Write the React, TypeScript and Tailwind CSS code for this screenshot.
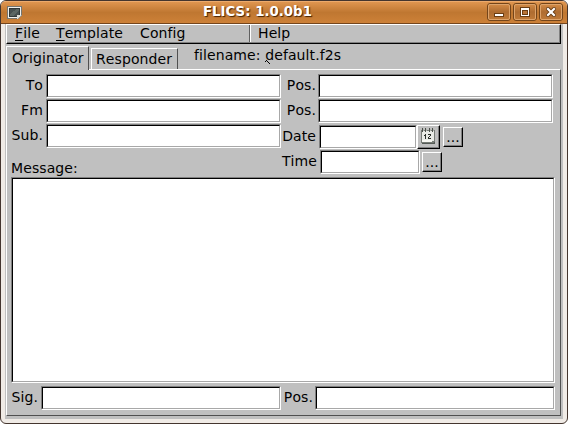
import type { ReactNode } from "react";

function Field({ className, label }: { className: string; label: string }) {
  return (
    <div className={`shrink-0 border border-t-[#808080] border-l-[#808080] border-r-white border-b-white ${className}`}>
      <input
        aria-label={label}
        className="block h-full w-full border border-t-black border-l-black border-r-[#a8a8a8] border-b-[#a8a8a8] bg-white px-1 outline-none"
      />
    </div>
  );
}

function Label({ className, children }: { className: string; children: ReactNode }) {
  return <span className={`flex shrink-0 justify-end leading-[22px] whitespace-nowrap ${className}`}>{children}</span>;
}

function DotsButton({ className }: { className: string }) {
  return (
    <button
      aria-label="Now"
      className={`h-5 w-5 shrink-0 border border-t-white border-l-white border-r-black border-b-black ${className}`}
    >
      <span className="flex h-full w-full items-end justify-center border-r border-b border-[#808080] pl-px leading-[15px]">
        ...
      </span>
    </button>
  );
}

function WindowButton({ className, children }: { className: string; children: ReactNode }) {
  return (
    <button
      className={`h-[18px] w-6 shrink-0 rounded-[3px] border border-[#74451a] bg-linear-to-b from-[#d58c46] via-[#ae6c31] to-[#c07a38] ${className}`}
    >
      <span className="flex h-full w-full items-center justify-center rounded-[2px] border border-[#dda36b]">
        {children}
      </span>
    </button>
  );
}

function CalendarIcon() {
  return (
    <svg width="15" height="17" viewBox="0 0 15 17" shapeRendering="crispEdges">
      <path d="M1 14h13v2H1z" fill="#555b55" />
      <path d="M0 2h14v11l-2 2H0z" fill="#777c76" />
      <path d="M1 3h12v10H1z" fill="#e9ebe6" />
      <path d="M1 12h10v2H1z" fill="#f8f8f3" />
      <path d="M1 0h1v4H1zM4 0h1v4H4zM8 0h1v4H8zM11 0h1v4h-1z" fill="#4b504b" />
      <path d="M2 1h1v2H2zM5 1h1v2H5zM9 1h1v2H9zM12 1h1v2h-1z" fill="#b0b4ae" />
      <path d="M4 6h1v5H4zM3 7h1v1H3zM7 6h3v1H7zM9 7h1v1H9zM8 8h1v1H8zM7 9h1v1H7zM7 10h3v1H7z" fill="#292f29" />
    </svg>
  );
}

function WindowIcon() {
  return (
    <svg width="16" height="14" viewBox="0 0 16 14" className="mt-[4px] ml-[6px] shrink-0" shapeRendering="crispEdges">
      <path d="M0 0h15v9l-4 4H0z" fill="#75756f" />
      <path d="M1 1h13v8l-4 3H1z" fill="#f0f0ed" />
      <path d="M2 2h11v6l-3 3H2z" fill="#303838" />
      <path d="M3 3h9v5l-2 2H3z" fill="#465050" />
      <path d="M3 8l7-5h2v2l-6 5H3z" fill="#5b6663" />
      <path d="M10 13V9h5z" fill="#deded8" />
      <path d="M11 12h1v-1h1v-1h1V9h1v1h-1v1h-1v1h-1v1h-1z" fill="#969690" />
    </svg>
  );
}

export default function App() {
  return (
    <div className="bg-white">
      <div className="relative flex h-[424px] w-[568px] flex-col overflow-hidden rounded-[6px] border border-[#44352e] bg-[#f0ebe6] font-['DejaVu_Sans',sans-serif] text-[14px] tracking-[0.1px] text-black [font-kerning:none]">
        <header className="flex h-[23px] shrink-0 border-t border-b border-t-[#ecaa6c] border-b-[#74451c] bg-linear-to-b from-[#df954f] via-[#bf7731] to-[#cd8138]">
          <WindowIcon />
          <h1 className="ml-[180px] w-[120px] text-[13.33px] leading-[19px] font-bold tracking-normal whitespace-nowrap text-white [font-kerning:normal] [text-shadow:1px_1px_1px_#442000]">
            FLICS: 1.0.0b1
          </h1>
          <WindowButton className="mt-px ml-[164px]">
            <svg width="10" height="8" viewBox="0 0 10 8" className="mt-[2px]" shapeRendering="crispEdges">
              <path d="M0 4h10v4H0z" fill="#6a3d14" />
              <path d="M1 5h8v2H1z" fill="#fff" />
            </svg>
          </WindowButton>
          <WindowButton className="mt-px ml-[2px]">
            <svg width="10" height="10" viewBox="0 0 10 10" shapeRendering="crispEdges">
              <path d="M0 0h10v10H0z" fill="#6a3d14" />
              <path d="M1 1h8v8H1z" fill="#fff" />
              <path d="M2 3h6v5H2z" fill="#6a3d14" />
              <path d="M3 4h4v3H3z" fill="#b97437" />
            </svg>
          </WindowButton>
          <WindowButton className="mt-px ml-[2px]">
            <svg width="10" height="10" viewBox="0 0 10 10">
              <path d="M2 2l6 6M8 2L2 8" stroke="#6a3d14" strokeWidth="4" strokeLinecap="square" />
              <path d="M2 2l6 6M8 2L2 8" stroke="#fff" strokeWidth="2.2" strokeLinecap="square" />
            </svg>
          </WindowButton>
        </header>

        <main className="mr-[4px] ml-[4px] flex h-[395px] shrink-0 flex-col bg-[#c0c0c0] pr-[2px] pl-px">
          <nav className="h-5 w-[555px] shrink-0 border border-t-white border-l-white border-r-black border-b-black">
            <div className="flex h-full border-r border-b border-[#808080] leading-[17px]">
              <span className="ml-[8px] w-[41px]"><u className="underline-offset-2">F</u>ile</span>
              <span className="w-[84px]"><u className="underline-offset-2">T</u>emplate</span>
              <span className="w-[109px]">Config</span>
              <span className="w-[9px] border-l border-[#606060]">
                <i className="block h-full w-px bg-white" />
              </span>
              <span>Help</span>
            </div>
          </nav>

          <div className="flex h-[26px] shrink-0 pt-[2px]">
            <div className="z-10 h-6 w-[83px] shrink-0 border-t border-r border-l border-t-white border-r-[#505050] border-l-white bg-[#c0c0c0] pl-[5px] leading-[23px]">
              Originator
            </div>
            <div className="mt-[2px] ml-[2px] h-[21px] w-[87px] shrink-0 border-t border-r border-l border-t-white border-r-[#505050] border-l-white pl-1 leading-[21px]">
              Responder
            </div>
            <div className="ml-4 leading-[19px] whitespace-nowrap">filename: default.f2s</div>
          </div>

          <section className="-mt-px h-[347px] w-[555px] shrink-0 border border-t-white border-l-white border-r-[#505050] border-b-[#505050]">
            <div className="mt-1 flex h-[25px]">
              <Label className="mr-[3px] w-9">To</Label>
              <Field label="To" className="h-6 w-[235px]" />
              <Label className="mr-[2px] w-[35px]">Pos.</Label>
              <Field label="To position" className="h-6 w-[235px]" />
            </div>
            <div className="flex h-[25px]">
              <Label className="mr-[3px] w-9">Fm</Label>
              <Field label="From" className="h-6 w-[235px]" />
              <Label className="mr-[2px] w-[35px]">Pos.</Label>
              <Field label="From position" className="h-6 w-[235px]" />
            </div>
            <div className="flex h-[53px]">
              <div className="w-[274px] shrink-0">
                <div className="flex">
                  <Label className="mr-[3px] w-9">Sub.</Label>
                  <Field label="Subject" className="h-6 w-[235px]" />
                </div>
                <div className="mt-[9px] ml-1 leading-[22px]">Message:</div>
              </div>
              <div className="pt-px">
                <div className="flex h-[25px]">
                  <Label className="mr-[3px] w-[35px]">Date</Label>
                  <Field label="Date" className="h-6 w-[98px]" />
                  <button aria-label="Choose date" className="h-6 w-[23px] border border-t-white border-l-white border-r-black border-b-black">
                    <span className="flex h-full w-full items-center justify-center border-r border-b border-[#808080]">
                      <CalendarIcon />
                    </span>
                  </button>
                  <DotsButton className="mt-[2px] ml-[3px]" />
                </div>
                <div className="flex h-[25px]">
                  <Label className="mr-[3px] w-9">Time</Label>
                  <Field label="Time" className="h-6 w-[100px]" />
                  <DotsButton className="mt-[2px] ml-[2px]" />
                </div>
              </div>
            </div>
            <div className="ml-1 h-[206px] w-[544px] border border-t-[#808080] border-l-[#808080] border-r-white border-b-white">
              <textarea
                aria-label="Message"
                className="block h-full w-full resize-none border border-t-black border-l-black border-r-[#a8a8a8] border-b-[#a8a8a8] bg-white outline-none"
              />
            </div>
            <div className="mt-[3px] flex">
              <Label className="mr-[3px] w-[31px]">Sig.</Label>
              <Field label="Signature" className="h-6 w-[240px]" />
              <Label className="mr-[2px] w-[32px]">Pos.</Label>
              <Field label="Signature position" className="h-6 w-[240px]" />
            </div>
          </section>
        </main>

        <svg className="absolute top-[58px] left-[263px]" width="8" height="8" viewBox="0 0 8 8" shapeRendering="crispEdges">
          <path d="M2 1h1v1H2zM1 2h1v1H1zM3 2h1v1H3zM4 3h1v1H4zM5 4h1v1H5z" fill="#000" />
        </svg>
      </div>
    </div>
  );
}
